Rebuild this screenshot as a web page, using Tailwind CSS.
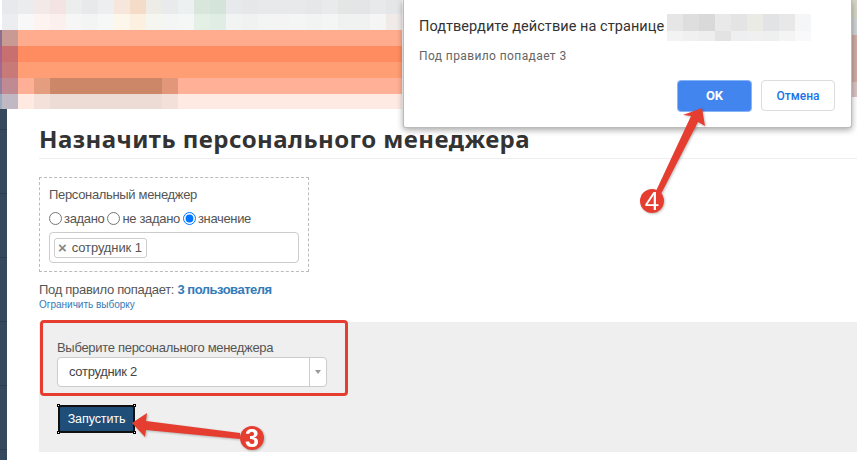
<!DOCTYPE html>
<html lang="ru">
<head>
  <meta charset="UTF-8" />
  <title>Назначить персонального менеджера</title>
  <script src="https://cdn.jsdelivr.net/npm/@tailwindcss/browser@4"></script>
</head>
<body class="bg-white">
  <div class="relative w-[857px] h-[460px] overflow-hidden font-['Liberation_Sans',sans-serif] text-[#555]">

    <!-- pixelated header -->
    <div id="mosaic" class="grid grid-cols-[2px_repeat(25,16px)] grid-rows-[14px_16px_16px_16px_16px_16px_15px] w-[402px] h-[109px]"></div>

    <div class="flex h-[351px]">
      <aside class="w-[7px] bg-[#34495e] shrink-0">
        <div class="h-[21px] border-b border-[#2c3e50]"></div>
        <div class="h-[64px] border-b border-[#2c3e50]"></div>
        <div class="h-[64px] border-b border-[#2c3e50]"></div>
        <div class="h-[64px] border-b border-[#2c3e50]"></div>
        <div class="h-[64px] border-b border-[#2c3e50]"></div>
        <div class="h-[64px] border-b border-[#2c3e50]"></div>
      </aside>

      <main class="flex-1 pl-[32px]">
        <h1 class="mt-[15px] h-[35px] leading-[29px] border-b border-[#eee] font-['Noto_Sans',sans-serif] font-bold text-[24px] tracking-[0.45px] text-[#333] whitespace-nowrap">Назначить персонального менеджера</h1>

        <div class="mt-[18px] w-[270px] h-[95px] border border-dashed border-[#bbb] pl-[9px] pr-[9px] pt-[9px] text-[13px] tracking-[-0.33px]">
          <div class="leading-[15px]">Персональный менеджер</div>
          <div class="mt-[9px] flex items-center h-[15px] leading-[15px]">
            <input type="radio" name="pm" class="w-[13px] h-[13px] m-0 mr-[2px]" />
            <span>задано</span>
            <input type="radio" name="pm" class="w-[13px] h-[13px] m-0 ml-[3px] mr-[2px]" />
            <span>не задано</span>
            <input type="radio" name="pm" checked class="w-[13px] h-[13px] m-0 ml-[3px] mr-[2px]" />
            <span>значение</span>
          </div>
          <div class="mt-[6px] h-[31px] border border-[#ccc] rounded-[4px] flex items-center pl-[4px]">
            <div class="h-[20px] border border-[#ccc] rounded-[3px] flex items-center pl-[3px] pr-[4px] text-[13px] tracking-[-0.1px]">
              <span class="text-[#888] text-[15px] font-bold leading-none mr-[5px]">×</span>сотрудник 1
            </div>
          </div>
        </div>

        <div class="mt-[10px] text-[13px] leading-[15px] tracking-[-0.3px]">Под правило попадает: <a class="font-bold text-[#337ab7] tracking-[-0.5px]">3 пользователя</a></div>
        <a class="block mt-[1px] text-[10px] leading-[14px] text-[#337ab7]">Ограничить выборку</a>

        <section class="mt-[10px] h-[130px] bg-[#efefef] pl-[18px] pt-[18px]">
          <label class="block text-[13px] leading-[15px] tracking-[-0.3px]">Выберите персонального менеджера</label>
          <div class="mt-[2px] w-[270px] h-[30px] bg-white border border-[#ccc] rounded-[4px] flex items-center text-[13px] text-[#444]">
            <span class="flex-1 pl-[11px] tracking-[-0.3px]">сотрудник 2</span>
            <span class="w-[17px] h-full border-l border-[#ccc] flex items-center justify-center">
              <span class="w-0 h-0 border-x-[3px] border-x-transparent border-t-[4px] border-t-[#999]"></span>
            </span>
          </div>
          <button class="relative block mt-[18px] ml-[1px] w-[77px] h-[28px] bg-[#1f4e79] border-2 border-[#111] rounded-[3px] text-white text-[12.5px] tracking-[-0.1px]">
            Запустить
            <span class="absolute -left-[3px] -top-[3px] w-[3px] h-[3px] bg-white border-[0.5px] border-black"></span>
            <span class="absolute -right-[3px] -top-[3px] w-[3px] h-[3px] bg-white border-[0.5px] border-black"></span>
            <span class="absolute -left-[3px] -bottom-[3px] w-[3px] h-[3px] bg-white border-[0.5px] border-black"></span>
            <span class="absolute -right-[3px] -bottom-[3px] w-[3px] h-[3px] bg-white border-[0.5px] border-black"></span>
          </button>
        </section>
      </main>
    </div>

    <!-- strip of header visible right of the dialog -->
    <div class="absolute right-0 top-0 w-[6px] h-[97px] flex flex-col">
      <div class="h-[18px] bg-[#d6d6c8]"></div>
      <div class="h-[17px] bg-[#d0d4d4]"></div>
      <div class="h-[47px] bg-[#d0aca4]"></div>
      <div class="h-[15px] bg-[#dcc4c4]"></div>
    </div>

    <!-- browser confirm dialog -->
    <div class="absolute left-[403px] top-0 w-[449px] h-[128px] bg-white rounded-b-[3px] border border-t-0 border-[#bbb] shadow-[0_2px_6px_rgba(0,0,0,0.35)] pl-[15px] pr-[16px] font-['Roboto',sans-serif]">
      <div class="mt-[18px] flex items-center h-[18px] text-[14.5px] tracking-[0.06px] text-[#333] whitespace-nowrap">
        Подтвердите действие на странице
        <span id="site-name" class="ml-[3px] w-[144px] h-[27px] grid grid-cols-9 grid-rows-[17px_10px] shrink-0"></span>
      </div>
      <div class="mt-[12px] text-[12px] tracking-[0.4px] leading-[16px] text-[#666]">Под правило попадает 3</div>
      <div class="absolute right-[16px] top-[80px] flex gap-[9px] items-start">
        <button class="w-[75px] h-[32px] rounded-[4px] bg-[#4285ee] border border-[#8ab4f8] text-white text-[13px] font-bold">OK</button>
        <button class="w-[74px] h-[31px] rounded-[4px] bg-white border border-[#dadce0] text-[#1a73e8] text-[12px] font-medium">Отмена</button>
      </div>
    </div>

    <!-- red annotations -->
    <div class="absolute left-[40px] top-[320px] w-[308px] h-[76px] border-[3px] border-[#e53e30] rounded-[4px]"></div>
    <svg class="absolute left-0 top-0 pointer-events-none drop-shadow-[1px_1px_1px_rgba(0,0,0,0.25)]" width="857" height="460" viewBox="0 0 857 460">
      <path d="M702 108 L705 126 L698 122 L661 194 L656 191 L691 116 L683 115 Z" fill="#e53e30" />
      <path d="M132 423 L147 413 L146 421 L240 433 L240 439 L146 430 L145 437 Z" fill="#e53e30" />
      <circle cx="652" cy="201" r="12" fill="#e53e30" />
      <circle cx="252" cy="438" r="12" fill="#e53e30" />
      <text x="652" y="210" text-anchor="middle" fill="#fff" font-size="26" font-family="Liberation Sans, sans-serif">4</text>
      <text x="252" y="447" text-anchor="middle" fill="#fff" font-size="25" font-weight="bold" font-family="Liberation Sans, sans-serif">3</text>
    </svg>
  </div>

<script>
// first value of each row is the 2px edge, then 16px blocks
const top0 = ["ffffff","e8e9ec","ebecee","f3e9e8","f3e3e2","eceded","e8e9ea","eceef0","f6e6dc","f5dcc9","eeece6","e8eaec","ecf0f1","d9e6dc","d4e4da","e8e9ec","e6e7e9","e8e9eb","e8e9eb","e8e9eb","e6e7e9","e9eaec","e4e6e6","e4e5e6","e8e9eb","e5e6e8"];
const top1 = ["ffffff","ecedf1","f8f8f8","fdf3f0","fbf0ee","f6f6f6","f3f4f4","f6f7f7","fdf6ea","fcf1e0","f6f6f1","f4f5f5","f5f7f7","e4efe6","e0ede4","f2f3f3","f0f1f1","f3f4f4","f4f4f4","f4f5f5","f2f3f3","f4f5f5","f0f1f1","f0f1f1","f5f5f5","f0ebe8"];
const fill = (edge, first, main, n = 24) => [edge, first, ...Array(n).fill(main)];
const rows = [
  top0,
  top1,
  fill("8c6f8c", "c99a94", "ffab8e"),
  fill("a8608c", "c8706f", "ff8c60"),
  fill("a06a90", "c77a78", "ff9d75"),
  ["8f7f9f", "bf8a92", "ffaf96", "e59d7f", ...Array(7).fill("cc8768"), "e3977a", ...Array(14).fill("ffb097")],
  ["9aacbf", "c0b9c3", "ffe9e1", "f4e1d9", ...Array(7).fill("eddcd5"), "f3e0d8", ...Array(14).fill("ffeae3")]
];
const cells = list => list.map(c => `<div style="background:#${c}"></div>`).join("");
document.getElementById("mosaic").innerHTML = cells(rows.flat());
document.getElementById("site-name").innerHTML = cells([
  "e6e6e6","dedede","d9d9d9","e9e9e9","e4e4e4","ebebe6","e2e3e5","e8e8e8","f5f6f8",
  "f3f3f3","f0f0f0","eeeeee","e3e3e3","eeeff1","f0f0f0","eef0f0","f4f4f4","f9f9fb"
]);
</script>
</body>
</html>
